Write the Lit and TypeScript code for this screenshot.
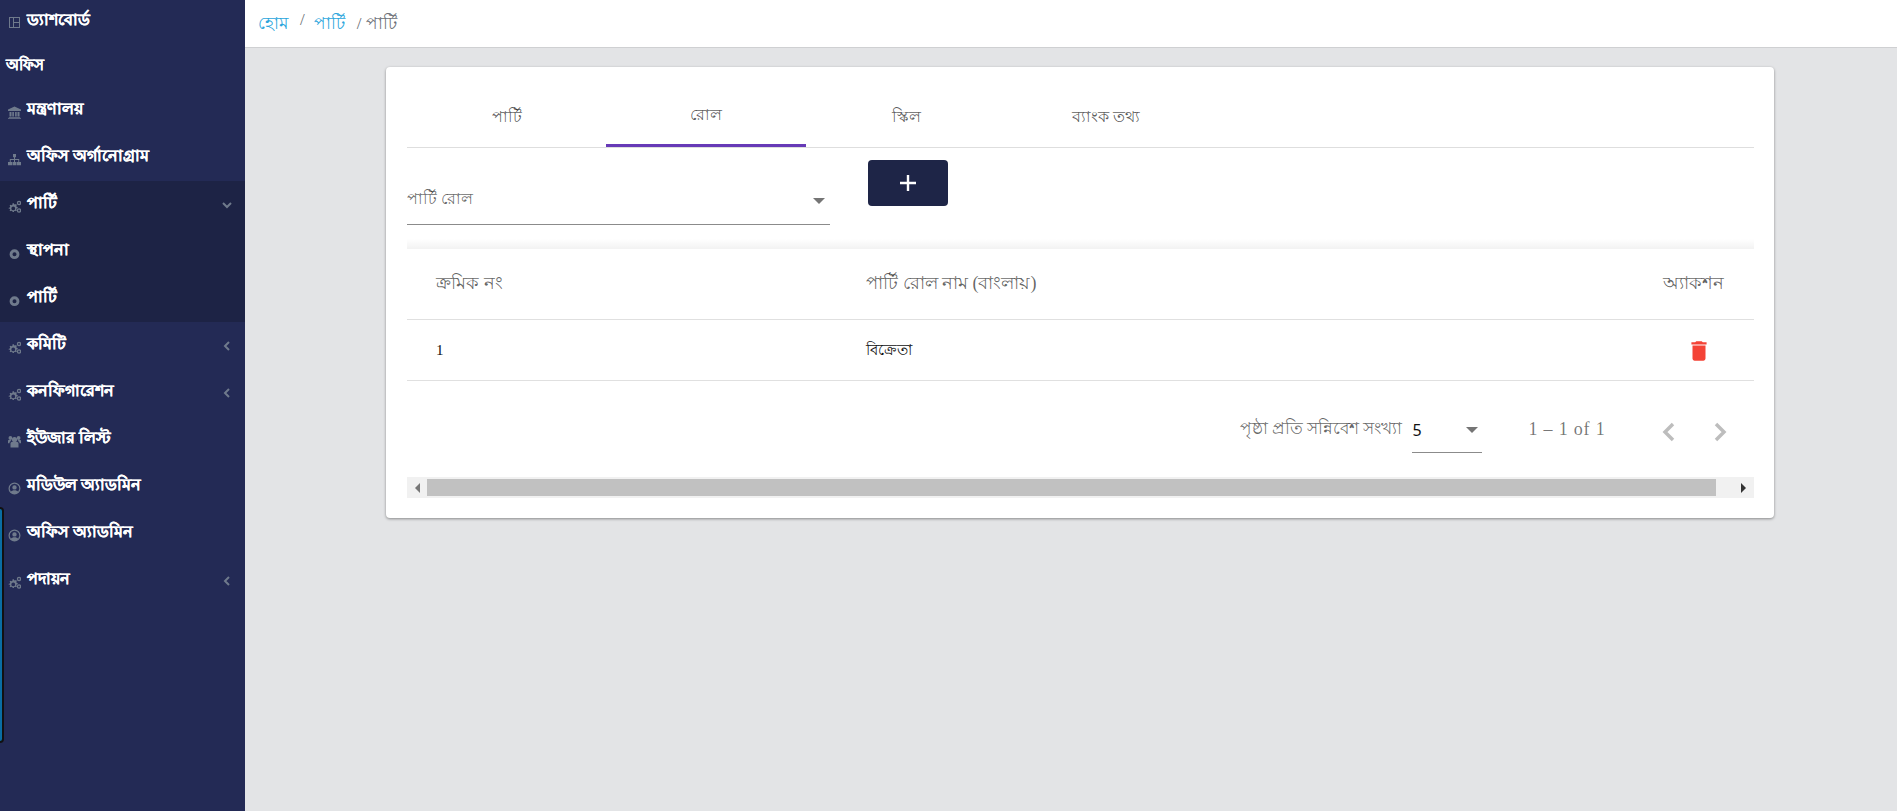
import { LitElement, html, css, svg } from "lit";
import { customElement } from "lit/decorators.js";

const COG = svg`<path fill-rule="evenodd" d="M4.600 3.200h1.300l.3 1.100.8.3 1-.6.900.900-.6 1 .3.800 1.100.3v1.300l-1.100.3-.3.800.6 1-.9.900-1-.6-.8.3-.3 1.100H4.600l-.3-1.100-.8-.3-1 .6-.9-.9.6-1-.3-.8L.8 9V7.700l1.100-.3.3-.8-.6-1 .9-.9 1 .6.8-.3zM5.250 6.500a1.900 1.900 0 1 0 0 3.800 1.900 1.900 0 0 0 0-3.800z"/><path fill-rule="evenodd" d="M11 .8a2.200 2.200 0 1 1 0 4.400 2.200 2.200 0 0 1 0-4.400zm0 1.300a.9.9 0 1 0 0 1.800.9.9 0 0 0 0-1.800z"/><path fill-rule="evenodd" d="M11 8.300a2.200 2.200 0 1 1 0 4.400 2.200 2.200 0 0 1 0-4.400zm0 1.300a.9.900 0 1 0 0 1.800.9.900 0 0 0 0-1.800z"/>`;

const ICONS: Record<string, unknown> = {
  dash: svg`<path fill-rule="evenodd" d="M1 1h11v11H1z M2 2v9h3V2z M6 2v4h5V2z M6 7v4h5V7z"/>`,
  bank: svg`<path d="M6.500 0.500 0 3.500V5h13V3.500z M1.500 6h2v4.500h-2z M4.300 6h1.600v4.500H4.300z M7.100 6h1.600v4.500H7.100z M9.500 6h2v4.500h-2z M.8 11h11.400v.8H.8z M0 12.200h13V13H0z"/>`,
  org: svg`<path d="M5 1h3v3.200H7V6h4.200v3H13v3.200H9V9h1.300V7H7v2h1.500v3.200h-4V9H6V7H2.700v2H4v3.200H0V9h1.800V6H6V4.200H5z"/>`,
  cogs: COG,
  users: svg`<circle cx="6.500" cy="4.500" r="2.600"/><circle cx="2.400" cy="3" r="1.900"/><circle cx="10.600" cy="3" r="1.900"/><path d="M2.500 8.200c0-1.200 1.500-1.400 4-1.400s4 .2 4 1.400v4.300h-8zM0 5.600c0-.5 1-.6 2.500-.6l1 1c-1.500.4-2 1-2 2.200H0zM13 5.600c0-.5-1-.6-2.500-.6l-1 1c1.500.4 2 1 2 2.200H13z"/>`,
  user: svg`<path fill-rule="evenodd" d="M6.500.5a6 6 0 1 1 0 12 6 6 0 0 1 0-12zm0 1.200a4.800 4.800 0 0 0-3.600 8c.7-1 2-1.500 3.600-1.500s2.900.5 3.600 1.500a4.800 4.800 0 0 0-3.600-8zm0 1.500a2.200 2.200 0 1 1 0 4.400 2.200 2.200 0 0 1 0-4.400z"/>`,
  dot: svg`<path fill-rule="evenodd" d="M6.500 2.300a4.900 4.900 0 1 1 0 9.800 4.900 4.900 0 0 1 0-9.800zm0 2.900a2 2 0 1 0 0 4 2 2 0 0 0 0-4z"/>`,
};

type Item = { icon: string; label: string; chev?: "down" | "left" };

const TOP: Item[] = [
  { icon: "bank", label: "মন্ত্রণালয়" },
  { icon: "org", label: "অফিস অর্গানোগ্রাম" },
];
const GROUP: Item[] = [
  { icon: "cogs", label: "পার্টি", chev: "down" },
  { icon: "dot", label: "স্থাপনা" },
  { icon: "dot", label: "পার্টি" },
];
const REST: Item[] = [
  { icon: "cogs", label: "কমিটি", chev: "left" },
  { icon: "cogs", label: "কনফিগারেশন", chev: "left" },
  { icon: "users", label: "ইউজার লিস্ট" },
  { icon: "user", label: "মডিউল অ্যাডমিন" },
  { icon: "user", label: "অফিস অ্যাডমিন" },
  { icon: "cogs", label: "পদায়ন", chev: "left" },
];

@customElement("app-root")
export class AppRoot extends LitElement {
  static styles = css`
    :host {
      display: flex;
      width: 100%;
      height: 811px;
      overflow: hidden;
      position: relative;
      background: #e3e4e6;
      font-family: "Liberation Serif", serif;
    }
    * { box-sizing: border-box; }
    .side { width: 245px; flex: none; background: #232a55; color: #fff; font-weight: 700; font-size: 16px; -webkit-text-stroke: .2px #fff; }
    .item { height: 47px; display: flex; align-items: center; padding-left: 8px; }
    .item span { position: relative; top: -1px; }
    .item.first { height: 40px; }
    .item.first span { top: 0; }
    .ico { width: 13px; height: 13px; margin-right: 6px; fill: #6f7a8c; flex: none; position: relative; top: 2px; }
    .chev { margin-left: auto; margin-right: 13px; width: 10px; height: 10px; fill: none; stroke: #6f7a8c; stroke-width: 2; flex: none; }
    .label { height: 47px; display: flex; align-items: center; padding: 4px 0 0 6px; font-size: 15px; }
    .group { background: #1d2345; }
    .peek {
      position: absolute; left: -6px; top: 507px; width: 10px; height: 236px;
      background: #0a6da3; border: 2px solid #111; border-radius: 4px;
    }
    .main { flex: 1; min-width: 0; display: flex; flex-direction: column; }
    .crumbs {
      height: 48px; flex: none; background: #fff; border-bottom: 1px solid #cfd0d2;
      display: flex; align-items: center; padding-left: 13px; gap: 12px; font-size: 17px; color: #6b6f76;
    }
    .crumbs a { color: #2aa5dc; }
    .crumbs span { display: flex; gap: 9px; }
    .crumbs span.last { gap: 12px; }
    .card {
      margin: 19px 123px 0 141px; height: 451px; background: #fff; border-radius: 4px;
      box-shadow: 0 1px 3px rgba(0,0,0,.4); padding: 0 20px 0 21px;
    }
    .tabs { display: flex; height: 81px; border-bottom: 1px solid #dedede; }
    .tab {
      width: 200px; display: flex; align-items: center; justify-content: center; font-size: 16px;
      color: rgba(0,0,0,.65); padding-top: 20px;
    }
    .tab:first-child { width: 199px; }
    .tab.on { border-bottom: 3px solid #673ab7; }
    .filter { display: flex; height: 91px; align-items: flex-start; }
    .fade { height: 10px; background: linear-gradient(to bottom, rgba(0,0,0,0), rgba(0,0,0,.05)); }
    .sel {
      width: 423px; height: 77px; display: flex; align-items: center; border-bottom: 1px solid #8b8b8b;
      font-size: 16px; color: rgba(0,0,0,.6); padding-top: 26px;
    }
    .arrow { width: 0; height: 0; border: 6px solid transparent; border-top-color: #757575; border-bottom: 0; }
    .sel .arrow { margin-left: auto; margin-right: 5px; margin-top: 4px; }
    .add {
      margin: 12px 0 0 38px; width: 80px; height: 46px; background: #1e2547; color: #fff; border-radius: 4px;
      display: flex; align-items: center; justify-content: center;
    }
    .add svg { width: 18px; height: 18px; stroke: #fff; stroke-width: 2.4; }
    .row { display: grid; grid-template-columns: 430px 1fr auto; align-items: center; border-bottom: 1px solid #e0e0e0; padding: 0 30px 0 29px; }
    .row.head { height: 71px; font-size: 18px; color: rgba(0,0,0,.62); }
    .row.body { height: 61px; font-size: 15px; color: #111; }
    .trash { width: 26px; height: 26px; fill: #f44336; margin: 1px 12px 0 auto; display: block; }
    .pager { display: flex; height: 96px; align-items: center; font-size: 16.6px; color: rgba(0,0,0,.6); padding-left: 833px; }
    .pgsel { width: 70px; height: 48px; margin-left: 10px; display: flex; align-items: center; border-bottom: 1px solid #8b8b8b; color: #111; font-family: "Noto Sans", sans-serif; font-size: 16px; padding-top: 2px; }
    .pgsel .arrow { margin-left: auto; margin-right: 4px; }
    .range { margin-left: 46px; font-size: 18px; letter-spacing: .8px; color: rgba(0,0,0,.55); }
    .nav { width: 32px; height: 32px; fill: none; stroke: #bdbdbd; stroke-width: 2.6; flex: none; margin-top: 5px; }
    .nav.p { margin-left: 48px; }
    .nav.n { margin-left: 19px; }
    .bar { height: 21px; background: #f1f1f1; display: flex; align-items: center; }
    .btn { width: 20px; display: flex; justify-content: center; flex: none; }
    .thumb { flex: 1; height: 17px; background: #c1c1c1; }
    .tl { border: 5px solid transparent; border-right: 5px solid #777; border-left: 0; width: 0; height: 0; }
    .tr { border: 5px solid transparent; border-left: 5px solid #333; border-right: 0; width: 0; height: 0; }
    .barr { width: 38px; justify-content: flex-start; padding-left: 25px; }
  `;

  private ic(name: string) {
    return html`<svg class="ico" viewBox="0 0 13 13">${ICONS[name]}</svg>`;
  }

  private item(i: Item) {
    return html`<div class="item">
      ${this.ic(i.icon)}<span>${i.label}</span>
      ${i.chev === "down"
        ? html`<svg class="chev" viewBox="0 0 10 10"><path d="M1 3l4 4 4-4" /></svg>`
        : i.chev === "left"
        ? html`<svg class="chev" viewBox="0 0 10 10"><path d="M7 1L3 5l4 4" /></svg>`
        : ""}
    </div>`;
  }

  render() {
    return html`
      <nav class="side" lang="bn">
        <div class="item first">${this.ic("dash")}<span>ড্যাশবোর্ড</span></div>
        <div class="label">অফিস</div>
        ${TOP.map((i) => this.item(i))}
        <div class="group">${GROUP.map((i) => this.item(i))}</div>
        ${REST.map((i) => this.item(i))}
      </nav>
      <div class="peek"></div>
      <div class="main" lang="bn">
        <div class="crumbs">
          <a>হোম</a>
          <span>/ <a>পার্টি</a></span>
          <span class="last">/ পার্টি</span>
        </div>
        <div class="card">
          <div class="tabs">
            <div class="tab">পার্টি</div>
            <div class="tab on">রোল</div>
            <div class="tab">স্কিল</div>
            <div class="tab">ব্যাংক তথ্য</div>
          </div>
          <div class="filter">
            <div class="sel">পার্টি রোল<i class="arrow"></i></div>
            <div class="add"><svg viewBox="0 0 18 18"><path d="M9 1v16M1 9h16" /></svg></div>
          </div>
          <div class="fade"></div>
          <div class="table">
            <div class="row head"><div>ক্রমিক নং</div><div>পার্টি রোল নাম (বাংলায়)</div><div>অ্যাকশন</div></div>
            <div class="row body">
              <div>1</div><div>বিক্রেতা</div>
              <div><svg class="trash" viewBox="0 0 24 24"><path d="M6 19c0 1.100.9 2 2 2h8c1.100 0 2-.9 2-2V7H6zM19 4h-3.500l-1-1h-5l-1 1H5v2h14z" /></svg></div>
            </div>
          </div>
          <div class="pager">
            <span>পৃষ্ঠা প্রতি সন্নিবেশ সংখ্যা</span>
            <div class="pgsel">5<i class="arrow"></i></div>
            <span class="range">1 – 1 of 1</span>
            <svg class="nav p" viewBox="0 0 24 24"><path d="M15 6l-6 6 6 6" /></svg>
            <svg class="nav n" viewBox="0 0 24 24"><path d="M9 6l6 6-6 6" /></svg>
          </div>
          <div class="bar">
            <div class="btn"><i class="tl"></i></div>
            <div class="thumb"></div>
            <div class="btn barr"><i class="tr"></i></div>
          </div>
        </div>
      </div>
    `;
  }
}
